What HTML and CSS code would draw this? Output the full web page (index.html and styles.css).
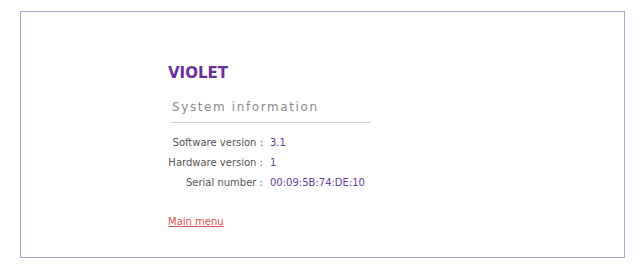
FILE: index.html
```html
<!DOCTYPE html>
<html>

<head>
  <meta charset="UTF-8">
  <title>Violet - System information</title>
  <link rel="stylesheet" href="styles.css">
</head>

<body>

  <div class="frame">
    <div class="content">

      <h1 class="brand">VIOLET</h1>

      <h2 class="section-title">System information</h2>

      <table class="info">
        <tr>
          <td class="label">Software version :</td>
          <td class="value">3.1</td>
        </tr>
        <tr>
          <td class="label">Hardware version :</td>
          <td class="value">1</td>
        </tr>
        <tr>
          <td class="label">Serial number :</td>
          <td class="value">00:09:5B:74:DE:10</td>
        </tr>
      </table>

      <p class="nav"><a href="#">Main menu</a></p>

    </div>
  </div>

</body>

</html>
```

FILE: styles.css
```css
body {
  margin: 0;
  padding: 11px 16px 0 20px;
  background: #fff;
  font-family: "DejaVu Sans", Verdana, sans-serif;
  color: #555;
}

.frame {
  width: 603px;
  height: 245px;
  border: 1px solid #aca5d4;
}

.content {
  padding: 52px 0 0 147px;
}

h1.brand {
  margin: 0;
  font-size: 15px;
  font-weight: bold;
  color: #6a2f9e;
  line-height: 18px;
}

h2.section-title {
  width: 198px;
  margin: 17px 0 0 3px;
  padding: 0 0 7px 1px;
  font-size: 12px;
  font-weight: normal;
  letter-spacing: 1.6px;
  color: #8a8a8a;
  border-bottom: 1px solid #cfcfcf;
  line-height: 16px;
}

table.info {
  margin: 9px 0 0 0;
  border-collapse: collapse;
  font-size: 10px;
}

table.info td {
  height: 20px;
  padding: 0;
}

td.label {
  width: 95px;
  text-align: right;
  padding-right: 7px !important;
  color: #555;
}

td.value {
  color: #6a3c9c;
}

p.nav {
  margin: 24px 0 0 0;
  font-size: 10px;
}

p.nav a {
  color: #d9534f;
}
```
